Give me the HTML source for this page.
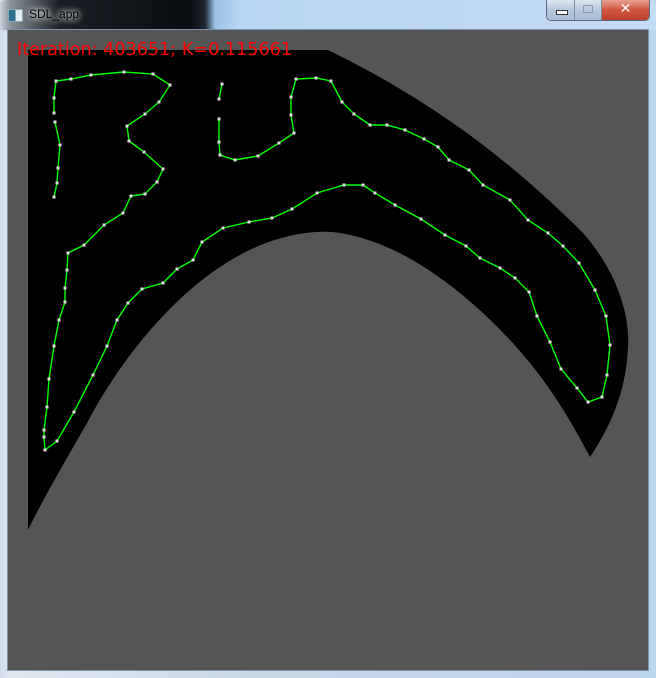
<!DOCTYPE html>
<html><head><style>
html,body{margin:0;padding:0;width:656px;height:678px;overflow:hidden;background:#b9d1ea}
.win{position:absolute;left:0;top:0;width:656px;height:678px;background:linear-gradient(90deg,#cfdbe6 0,#dfe8f0 8px,#c8d8e8 40%,#bcd4ec 100%);}
.title{position:absolute;left:0;top:0;width:656px;height:30px;background:linear-gradient(90deg,#c9d3dc 0px,#8a939b 10px,#1a1f25 60px,#0a0d12 190px,#1c2630 205px,#9cc0e4 215px,#b9d6f2 240px,#c4dcf4 656px);border-radius:6px 6px 0 0}
.ttext{position:absolute;left:29px;top:7px;font:12px "Liberation Sans",sans-serif;color:#000;text-shadow:0 0 6px #fff,0 0 8px #fff}
.client{position:absolute;left:8px;top:30px;width:640px;height:640px;background:#555;}
.frame{position:absolute;left:7px;top:29px;width:640px;height:640px;border:1px solid #7f94ab}
.btns{position:absolute;left:546px;top:0;width:102px;height:20px;border:1px solid #5a6b80;border-top:none;border-radius:0 0 5px 5px;overflow:hidden;display:flex}
</style></head><body>
<div class="win">
<div class="title">
 <div style="position:absolute;left:8px;top:9px;width:13px;height:11px;background:linear-gradient(90deg,#2c6f8e 50%,#e6eef4 50%);border:1px solid #8aa"></div>
 <div class="ttext">SDL_app</div>
 <div class="btns">
  <div style="width:27px;background:linear-gradient(#dde7f2,#b5c8dc 50%,#a8bdd2);position:relative;border-right:1px solid #7d8fa4"><div style="position:absolute;left:9px;top:10px;width:10px;height:3px;background:#fff;border:1px solid #333"></div></div>
  <div style="width:26px;background:linear-gradient(#dde7f2,#b5c8dc 50%,#a8bdd2);position:relative;border-right:1px solid #7d8fa4"><div style="position:absolute;left:8px;top:5px;width:8px;height:6px;border:1px solid #8b9bb0"></div></div>
  <div style="flex:1;background:linear-gradient(#e8a090,#d0553f 50%,#c0402a);color:#fff;font:bold 14px 'DejaVu Sans',sans-serif;text-align:center;line-height:19px">✕</div>
 </div>
</div>
<div class="frame"></div>
<div class="client"></div>
<svg style="position:absolute;left:0;top:0" width="656" height="678">
<defs><marker id="m" markerWidth="3" markerHeight="3" refX="1.5" refY="1.5" markerUnits="userSpaceOnUse"><rect width="3" height="3" fill="#ddd"/></marker></defs>
<path fill="#000" d="M28,50 L328,50 C420,95 500,150 583,233 C620,275 630,320 628,347 C626,393 610,427 590,457 C560,400 533,360 483,313 C433,267 383,238 333,232 C300,230 260,240 220,267 C170,300 120,360 87,423 C60,470 40,505 28,530 Z"/>
<g fill="none" stroke="#00ff00" stroke-width="1.4" marker-start="url(#m)" marker-mid="url(#m)" marker-end="url(#m)">
<polyline points="54,197 57,183 58,168 60,145 55,122"/>
<polyline points="54,113 54,98 56,81 71,79 91,75 124,72 153,74 170,85 159,102 145,114 127,126 129,141 144,152 163,169 157,182 145,194 131,196 123,213 104,225 84,245 68,253 67,270 65,288 65,302 59,320 54,346 49,379 47,407 44,430 44,437 45,450 57,441 74,412 93,375 107,346 117,320 128,303 142,289 163,283 177,269 193,260 202,242 223,228 249,222 272,218 292,209 317,193 344,185 363,185 375,193 395,205 421,219 445,235 466,246 480,258 500,268 515,278 529,292 537,316 550,342 561,369 577,388 588,402 602,397 607,375 610,345 606,316 595,290 579,263 563,246 548,233 528,220 510,200 483,185 469,170 449,160 438,147 424,139 405,130 387,125 370,125 354,114 342,102 331,81 316,78 296,79 291,97 291,115 294,133 279,143 258,156 235,160 220,155 219,142 219,119"/>
<polyline points="219,99 222,84"/>
</g>
<text x="17" y="55" font-family="DejaVu Sans, Liberation Sans, sans-serif" font-size="17.6" fill="#ff0000">Iteration: 403651; K=0.115661</text>
</svg>
</div>
</body></html>
